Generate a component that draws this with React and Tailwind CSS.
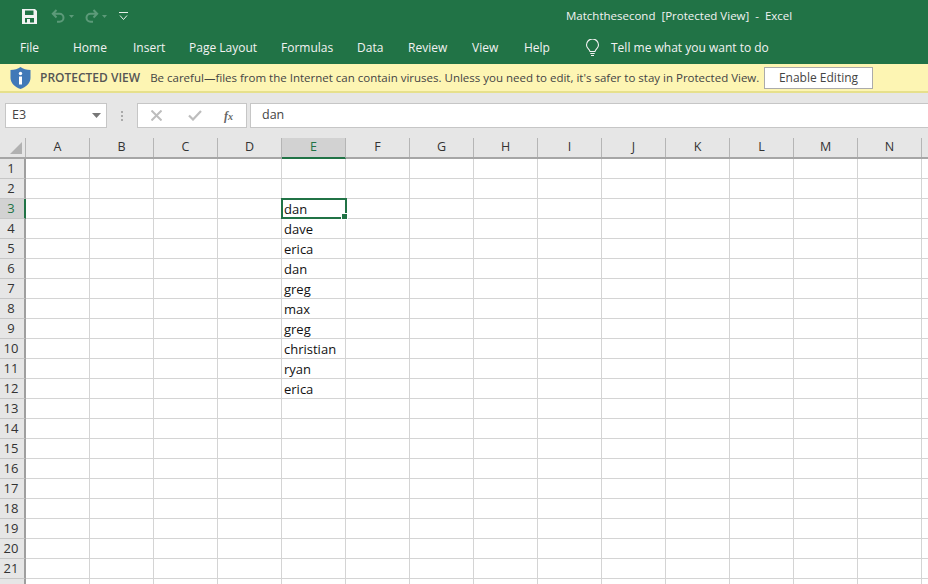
import React from 'react';

const columns = ['A', 'B', 'C', 'D', 'E', 'F', 'G', 'H', 'I', 'J', 'K', 'L', 'M', 'N'];
const rows = Array.from({ length: 22 }, (_, i) => i + 1);
const names = { 3: 'dan', 4: 'dave', 5: 'erica', 6: 'dan', 7: 'greg', 8: 'max', 9: 'greg', 10: 'christian', 11: 'ryan', 12: 'erica' };
const tabs = [
  { label: 'File', cls: 'w-[53px]' },
  { label: 'Home', cls: 'w-[60px]' },
  { label: 'Insert', cls: 'w-[56px]' },
  { label: 'Page Layout', cls: 'w-[92px]' },
  { label: 'Formulas', cls: 'w-[76px]' },
  { label: 'Data', cls: 'w-[51px]' },
  { label: 'Review', cls: 'w-[64px]' },
  { label: 'View', cls: 'w-[52px]' },
  { label: 'Help', cls: 'w-[52px]' },
];

const SaveIcon = () => (
  <svg width="15" height="15" viewBox="0 0 15 15">
    <path fillRule="evenodd" fill="#f3f3f3" d="M0 0h13l2 2v13H0zM3 1.500v4.500h8.500V1.500zM3 9v4.500h2V10h3v3.500h4V9z" />
  </svg>
);

const UndoIcon = ({ flip }) => (
  <svg width="15" height="14" viewBox="0 0 15 14" className={flip ? '-scale-x-100' : ''} fill="none" stroke="#5c9a79" strokeWidth="2">
    <path d="M5.500 1 1.800 4.800l3.700 3.700M2 4.800h6.500a4 4 0 0 1 0 8H6" />
  </svg>
);

const SmallCaret = () => (
  <svg width="5" height="3" viewBox="0 0 5 3"><path d="M0 0h5L2.500 3z" fill="#5c9a79" /></svg>
);

const Row1Header = ({ n }) => (
  <div className={`w-[26px] shrink-0 flex items-center justify-center border-b border-b-[#c6c6c6] border-r-2 text-[13px] pr-[2px] ${n === 3 ? 'bg-[#d2d2d2] border-r-[#217346] text-[#217346]' : 'bg-[#e6e6e6] border-r-[#9f9f9f] text-[#333]'}`}>
    {n}
  </div>
);

export default function App() {
  return (
    <div className="w-[928px] h-[584px] overflow-hidden bg-white flex flex-col font-['Open_Sans','Noto_Sans',sans-serif] text-[#222]">
      {/* Barra verde */}
      <div className="h-[64px] shrink-0 bg-[#217346] text-[#f2f2f2] text-[12px] flex flex-col">
        <div className="h-[32px] flex items-center">
          <div className="ml-[22px] flex items-center"><SaveIcon /></div>
          <div className="ml-[14px] flex items-center gap-[3px]"><UndoIcon /><SmallCaret /></div>
          <div className="ml-[10px] flex items-center gap-[3px]"><UndoIcon flip /><SmallCaret /></div>
          <svg className="ml-[12px]" width="9" height="9" viewBox="0 0 9 9" fill="none" stroke="#e8efe9">
            <path d="M0 .5h9M1 3.500l3.500 4 3.500-4" />
          </svg>
          <span className="ml-[438px] whitespace-pre text-[11.5px]">Matchthesecond  [Protected View]  -  Excel</span>
        </div>
        <div className="h-[32px] flex items-center pl-[20px] pb-[1px]">
          {tabs.map((t) => (
            <span key={t.label} className={t.cls}>{t.label}</span>
          ))}
          <svg className="ml-[9px]" width="15" height="18" viewBox="0 0 15 18" fill="none" stroke="#f2f2f2" strokeWidth="1.100">
            <path d="M5 12.500C4.500 10 1.500 9.300 1.500 6a6 6 0 0 1 12 0c0 3.300-3 4-3.500 6.500zM5.300 14.500h4.400M6 16.500h3" />
          </svg>
          <span className="ml-[11px]">Tell me what you want to do</span>
        </div>
      </div>

      {/* Aviso de vista protegida */}
      <div className="h-[29px] shrink-0 bg-[#fdf5b3] border-b-2 border-b-[#e6e08c] flex items-center pl-[10px] text-[11.500px] text-[#444]">
        <svg width="21" height="22" viewBox="0 0 21 22">
          <path d="M10.500 0 C13 2 16.500 3 20.500 3 V11 C20.500 16 16 20 10.500 22 C5 20 .5 16 .5 11 V3 C4.500 3 8 2 10.500 0z" fill="#4179b8" />
          <circle cx="10.500" cy="6.500" r="1.700" fill="#fff" />
          <path d="M9 9.500h3v8H9z" fill="#fff" />
        </svg>
        <span className="ml-[9px] font-semibold text-[12px] text-[#555]">PROTECTED VIEW</span>
        <span className="ml-[10px]">Be careful—files from the Internet can contain viruses. Unless you need to edit, it's safer to stay in Protected View.</span>
        <button className="absolute left-[764px] top-[67px] w-[109px] h-[22px] bg-white border border-[#ababab] text-[12px] text-[#444]">Enable Editing</button>
      </div>

      {/* Barra de fórmulas */}
      <div className="h-[45px] shrink-0 bg-[#e6e6e6] flex pt-[10px] pb-[10px] text-[12.500px]">
        <div className="ml-[5px] w-[102px] bg-white border border-[#c6c6c6] flex items-center justify-between pl-[6px] pr-[5px] text-[#444]">
          <span>E3</span>
          <svg width="9" height="5" viewBox="0 0 9 5"><path d="M0 0h9L4.500 5z" fill="#777" /></svg>
        </div>
        <div className="w-[30px] flex flex-col items-center justify-center gap-[2px]">
          <span className="w-[2px] h-[2px] bg-[#aaa]" />
          <span className="w-[2px] h-[2px] bg-[#aaa]" />
          <span className="w-[2px] h-[2px] bg-[#aaa]" />
        </div>
        <div className="w-[110px] bg-white border border-[#c6c6c6] flex items-center pl-[13px]">
          <svg width="11" height="11" viewBox="0 0 11 11" stroke="#bdbdbd" strokeWidth="2" fill="none"><path d="M.5.5l10 10M10.500.5l-10 10" /></svg>
          <svg className="ml-[26px]" width="14" height="11" viewBox="0 0 14 11" stroke="#bdbdbd" strokeWidth="2.200" fill="none"><path d="M1 5.500l4 4L13 1" /></svg>
          <span className="ml-[22px] font-['Liberation_Serif',serif] italic font-bold text-[12px] text-[#666]">f<span className="text-[10px]">x</span></span>
        </div>
        <div className="ml-[3px] flex-1 bg-white border border-[#c6c6c6] border-r-0 flex items-center pl-[11px] text-[#444]">dan</div>
      </div>

      {/* Hoja */}
      <div className="relative flex-1 min-h-0 flex flex-col overflow-hidden">
        <div className="h-[21px] shrink-0 flex bg-[#e6e6e6] border-b-2 border-b-[#a6a6a6] text-[12.500px] text-[#333]">
          <div className="w-[26px] shrink-0 relative border-r border-r-[#b5b5b5]">
            <svg className="absolute right-[3px] bottom-[3px]" width="12" height="12" viewBox="0 0 12 12"><path d="M12 0v12H0z" fill="#b1b1b1" /></svg>
          </div>
          {columns.map((c) => (
            <div key={c} className={`w-[64px] shrink-0 flex items-center justify-center border-r border-r-[#b5b5b5] ${c === 'E' ? 'bg-[#d2d2d2] text-[#217346] h-[21px] border-b-2 border-b-[#217346]' : ''}`}>
              {c}
            </div>
          ))}
        </div>
        {rows.map((n) => (
          <div key={n} className="h-[20px] shrink-0 flex">
            <Row1Header n={n} />
            {columns.map((c) => (
              <div key={c} className="w-[64px] shrink-0 border-r border-b border-[#d4d4d4] pl-[2px] text-[13px] leading-[20px] text-[#111] whitespace-nowrap">
                {c === 'E' ? names[n] : ''}
              </div>
            ))}
            <div className="flex-1 border-b border-[#d4d4d4]" />
          </div>
        ))}
        {/* Celda activa */}
        <div className="absolute left-[281px] top-[60px] w-[66px] h-[21px] border-2 border-[#217346]">
          <span className="absolute right-[-3px] bottom-[-3px] w-[5px] h-[5px] bg-[#217346] border border-white box-content" />
        </div>
      </div>
    </div>
  );
}
